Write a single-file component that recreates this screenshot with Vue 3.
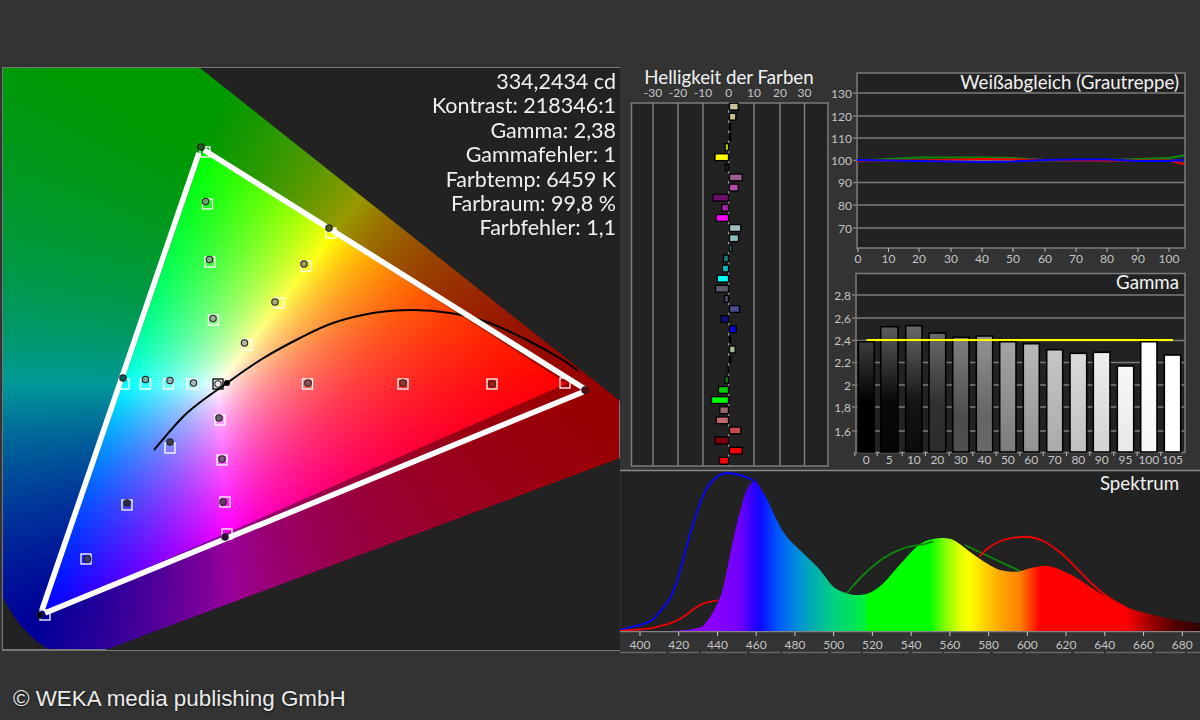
<template>
  <div class="page">
    <div class="charts">
      <div class="cie">
        <canvas ref="gamut" class="gamut" width="616" height="581"></canvas>
        <svg class="overlay" viewBox="3 68 616 581" width="616" height="581">
          <polygon points="200,68 620,401 620,68" fill="#222" />
          <polygon points="620,458 105,650 620,650" fill="#222" />
          <path d="M3,597 C15,622 30,638 48,649 L3,649 Z" fill="#222" />
          <path :d="smooth(locus)" fill="none" stroke="#000" stroke-width="2" />
          <g stroke="#fff" stroke-width="1.3" fill="none">
            <rect v-for="m in markers" :key="'s' + m.sx + m.sy" :x="m.sx - 5" :y="m.sy - 5" width="10" height="10" :stroke="m.black ? '#000' : '#fff'" />
          </g>
          <g fill="none" stroke="#fff" stroke-width="5.6">
            <line x1="199" y1="153" x2="42" y2="610" />
            <line x1="204" y1="150" x2="585" y2="389" />
            <line x1="45" y1="613" x2="583" y2="392" />
          </g>
          <circle v-for="m in markers" :key="'c' + m.cx + m.cy" :cx="m.cx" :cy="m.cy" r="3.2" :fill="m.fill" stroke="#222" stroke-width="1.1" />
          <circle cx="227" cy="383" r="3" fill="#000" />
        </svg>
        <div class="stats">
          <div v-for="line in stats" :key="line">{{ line }}</div>
        </div>
      </div>

      <div class="right">
        <div class="upper">
          <svg class="bright" viewBox="620 67 220 403" width="220" height="403">
            <text x="729" y="84" text-anchor="middle" class="title">Helligkeit der Farben</text>
            <text v-for="t in brightTicks" :key="t.label" :x="t.x" y="97" text-anchor="middle" class="tick">{{ t.label }}</text>
            <rect x="631.5" y="103" width="196.5" height="363" fill="#222" stroke="#7c7c7c" stroke-width="1.5" />
            <line v-for="t in brightTicks.filter(b => b.label !== '0')" :key="'g' + t.label" :x1="t.x" :x2="t.x" y1="103" y2="466" stroke="#7c7c7c" stroke-width="1.5" />
            <line x1="728.7" x2="728.7" y1="110" y2="466" stroke="#999" stroke-width="1.2" stroke-dasharray="3 7.12" />
            <rect
              v-for="(b, i) in brightBars"
              :key="i"
              :x="b.w > 0 ? 729.5 : 728.5 + b.w"
              :y="103.2 + i * 10.12"
              :width="Math.abs(b.w)"
              height="6.8"
              :fill="b.c"
              stroke="#000"
              stroke-width="1.3"
            />
          </svg>

          <div class="side">
            <svg viewBox="840 67 360 201" width="360" height="201">
              <rect x="857" y="73" width="328" height="175" fill="#222" stroke="#7c7c7c" stroke-width="1.5" />
              <g v-for="g in wbRows" :key="g.label">
                <line x1="853" x2="1185" :y1="g.y" :y2="g.y" stroke="#7c7c7c" stroke-width="1.3" />
                <text x="852" :y="g.y + 4.5" text-anchor="end" class="tick">{{ g.label }}</text>
              </g>
              <g v-for="c in wbCols" :key="c.label">
                <line :x1="c.x" :x2="c.x" y1="248" y2="252" stroke="#bbb" />
                <text :x="c.x" y="263" text-anchor="middle" class="tick">{{ c.label }}</text>
              </g>
              <text x="1179" y="89" text-anchor="end" class="title">Weißabgleich (Grautreppe)</text>
              <polyline :points="toPoints(wbGreen)" fill="none" stroke="#0a8a0a" stroke-width="2" />
              <polyline :points="toPoints(wbRed)" fill="none" stroke="#f00000" stroke-width="2" />
              <polyline :points="toPoints(wbBlue)" fill="none" stroke="#0000ff" stroke-width="2" />
            </svg>

            <svg viewBox="840 268 360 202" width="360" height="202">
              <defs>
                <linearGradient v-for="(b, i) in gammaBars" :id="'gammaBar' + i" :key="i" x1="0" y1="0" x2="0" y2="1">
                  <stop v-for="(s, j) in b.stops" :key="j" :offset="s[0]" :stop-color="s[1]" />
                </linearGradient>
              </defs>
              <rect x="856" y="273.5" width="329" height="179" fill="#222" stroke="#7c7c7c" stroke-width="1.5" />
              <g v-for="g in gammaRows" :key="g.label">
                <line x1="852" x2="1185" :y1="g.y" :y2="g.y" stroke="#7c7c7c" stroke-width="1.3" />
                <text x="851" :y="g.y + 4.5" text-anchor="end" class="tick">{{ g.label }}</text>
              </g>
              <g v-for="(b, i) in gammaBars" :key="b.label">
                <rect :x="b.x0" :y="b.top" :width="b.x1 - b.x0" :height="452 - b.top" :fill="'url(#gammaBar' + i + ')'" stroke="#000" stroke-width="1.6" />
                <line :x1="b.x0 - 3.5" :x2="b.x0 - 3.5" y1="452" y2="456" stroke="#bbb" />
                <text :x="(b.x0 + b.x1) / 2" y="464" text-anchor="middle" class="tick">{{ b.label }}</text>
              </g>
              <text x="1179" y="289" text-anchor="end" class="title">Gamma</text>
              <line x1="866.5" x2="1173" y1="340" y2="340" stroke="#ffff00" stroke-width="2" />
            </svg>
          </div>
        </div>

        <svg viewBox="620 470 580 184" width="580" height="184">
          <defs>
            <linearGradient id="spectrumFill" gradientUnits="userSpaceOnUse" x1="621" y1="0" x2="1200" y2="0">
              <stop v-for="s in spectrumStops" :key="s.x" :offset="(s.x - 621) / 579" :stop-color="s.c" />
            </linearGradient>
          </defs>
          <rect x="621" y="471" width="579" height="160.5" fill="#222" />
          <line x1="620" x2="1200" y1="470.5" y2="470.5" stroke="#8a8a8a" stroke-width="1.6" />
          <path :d="spectrumPath" fill="url(#spectrumFill)" />
          <path :d="smooth(blueLine)" fill="none" stroke="#0000ff" stroke-width="1.8" />
          <path :d="smooth(redLeft)" fill="none" stroke="#f00000" stroke-width="1.8" />
          <path :d="smooth(greenLeft)" fill="none" stroke="#0a8a0a" stroke-width="1.8" />
          <path :d="smooth(greenRight)" fill="none" stroke="#0a8a0a" stroke-width="1.8" />
          <path :d="smooth(redRight)" fill="none" stroke="#f00000" stroke-width="1.8" />
          <line x1="620" x2="1200" y1="631.7" y2="631.7" stroke="#999" />
          <g v-for="t in spectrumTicks" :key="t.label">
            <line :x1="t.x" :x2="t.x" y1="632" y2="636" stroke="#ccc" />
            <text :x="t.x" y="649" text-anchor="middle" class="tick">{{ t.label }}</text>
          </g>
          <line x1="620" x2="1200" y1="652.5" y2="652.5" stroke="#666" stroke-width="1.4" stroke-dasharray="46 3 30 2" />
          <text x="1179" y="490" text-anchor="end" class="title">Spektrum</text>
        </svg>
      </div>
    </div>

    <div class="copyright">© WEKA media publishing GmbH</div>
  </div>
</template>

<script setup>
import { ref, onMounted } from 'vue'

const gamut = ref(null)

const stats = [
  '334,2434 cd',
  'Kontrast: 218346:1',
  'Gamma: 2,38',
  'Gammafehler: 1',
  'Farbtemp: 6459 K',
  'Farbraum: 99,8 %',
  'Farbfehler: 1,1'
]

const toPoints = (pts) => pts.map(p => p.join(',')).join(' ')

// catmull-rom through the measured points
const smooth = (pts) => {
  let d = `M${pts[0][0]},${pts[0][1]}`
  for (let i = 0; i < pts.length - 1; i++) {
    const p0 = pts[i - 1] || pts[i]
    const p1 = pts[i]
    const p2 = pts[i + 1]
    const p3 = pts[i + 2] || p2
    const c1x = p1[0] + (p2[0] - p0[0]) / 6
    const c1y = p1[1] + (p2[1] - p0[1]) / 6
    const c2x = p2[0] - (p3[0] - p1[0]) / 6
    const c2y = p2[1] - (p3[1] - p1[1]) / 6
    d += ` C${c1x.toFixed(1)},${c1y.toFixed(1)} ${c2x.toFixed(1)},${c2y.toFixed(1)} ${p2[0]},${p2[1]}`
  }
  return d
}

const locus = [
  [154, 450], [187, 413], [227, 383], [262, 359], [300, 338], [333, 323], [373, 313],
  [413, 310], [450, 313], [487, 322], [527, 340], [563, 360], [578, 371]
]

const markers = [
  { sx: 205, sy: 152, cx: 201, cy: 147, fill: '#1c5c1c' },
  { sx: 207.5, sy: 204, cx: 205.5, cy: 201.5, fill: '#6f9f6f' },
  { sx: 210, sy: 262, cx: 209.5, cy: 259.5, fill: '#8aab8a' },
  { sx: 213.5, sy: 320, cx: 213, cy: 318.5, fill: '#9fb49f' },
  { sx: 331, sy: 233, cx: 329, cy: 228, fill: '#4d5a10' },
  { sx: 306, sy: 266, cx: 304, cy: 264, fill: '#9a9a60' },
  { sx: 279, sy: 303, cx: 275, cy: 302, fill: '#a8a880' },
  { sx: 247, sy: 345, cx: 244.5, cy: 343, fill: '#b4b4a0' },
  { sx: 124, sy: 384, cx: 123, cy: 378, fill: '#0a5a5a' },
  { sx: 145.5, sy: 384, cx: 145.5, cy: 379.5, fill: '#6fa8a8' },
  { sx: 168.5, sy: 384, cx: 170, cy: 380.5, fill: '#88b4b4' },
  { sx: 192, sy: 384, cx: 193.5, cy: 383, fill: '#a4baba' },
  { sx: 218, sy: 384, cx: 218, cy: 384, fill: '#e8e8e8', black: true },
  { sx: 307.5, sy: 384, cx: 308, cy: 383, fill: '#8a5a5a' },
  { sx: 403, sy: 384, cx: 403, cy: 383, fill: '#a03a30' },
  { sx: 492, sy: 384, cx: 492, cy: 384, fill: '#a82010' },
  { sx: 565, sy: 383, cx: 585, cy: 390, fill: '#5a0a0a' },
  { sx: 220, sy: 420, cx: 219, cy: 418, fill: '#6a6070' },
  { sx: 222, sy: 460, cx: 222, cy: 459, fill: '#7a5a7a' },
  { sx: 225, sy: 502, cx: 223, cy: 502, fill: '#6a3a6a' },
  { sx: 227, sy: 534, cx: 225, cy: 537, fill: '#300a40' },
  { sx: 170, sy: 448, cx: 170, cy: 442, fill: '#3a3a4a' },
  { sx: 127, sy: 505, cx: 127, cy: 503, fill: '#2a2a4a' },
  { sx: 86, sy: 559, cx: 87.5, cy: 559, fill: '#3a3a6a' },
  { sx: 45, sy: 615, cx: 40, cy: 615, fill: '#05052a' }
]

const brightTicks = [
  { label: '-30', x: 653 }, { label: '-20', x: 678 }, { label: '-10', x: 703 }, { label: '0', x: 728.7 },
  { label: '10', x: 754 }, { label: '20', x: 780 }, { label: '30', x: 804.5 }
]

const brightBars = [
  { w: 8.7, c: '#c9c29a' }, { w: 6.3, c: '#c8c088' }, { w: 1.2, c: '#111' }, { w: 1.2, c: '#111' },
  { w: -3.3, c: '#d5d500' }, { w: -13.5, c: '#ffff00' }, { w: -3, c: '#222' }, { w: 12.7, c: '#9c5f94' },
  { w: 8.7, c: '#b84fb0' }, { w: -15.7, c: '#6a0f6a' }, { w: -6.7, c: '#b020b0' }, { w: -12.3, c: '#ff00ff' },
  { w: 11.3, c: '#a0bcbc' }, { w: 9, c: '#8cc0c0' }, { w: 2.5, c: '#2a7a7a' }, { w: -5, c: '#157a7a' },
  { w: -6, c: '#00c0c0' }, { w: -11.3, c: '#00ffff' }, { w: -13, c: '#5a5a6a' }, { w: -4, c: '#4a4a7a' },
  { w: 10, c: '#4a4a90' }, { w: -7.5, c: '#101080' }, { w: 6.7, c: '#0000e0' }, { w: 1.2, c: '#111' },
  { w: 5.7, c: '#a0c090' }, { w: 1.2, c: '#111' }, { w: -1.5, c: '#3a8a3a' }, { w: -3.7, c: '#108010' },
  { w: -10, c: '#00d000' }, { w: -17, c: '#00ff00' }, { w: -8.7, c: '#9a6a6a' }, { w: -12.3, c: '#c06868' },
  { w: 11.3, c: '#c84a4a' }, { w: -13.7, c: '#800010' }, { w: 12.7, c: '#ee0000' }, { w: -9, c: '#ff0000' }
]

const wbRows = [
  { label: '130', y: 93 }, { label: '120', y: 116 }, { label: '110', y: 138 }, { label: '100', y: 160.5 },
  { label: '90', y: 182.5 }, { label: '80', y: 205 }, { label: '70', y: 228 }
]

const wbCols = [
  { label: '0', x: 858 }, { label: '10', x: 888.5 }, { label: '20', x: 919 }, { label: '30', x: 951 },
  { label: '40', x: 982 }, { label: '50', x: 1013 }, { label: '60', x: 1045 }, { label: '70', x: 1076 },
  { label: '80', x: 1107 }, { label: '90', x: 1138 }, { label: '100', x: 1169 }
]

const wbGreen = [[857, 160.5], [919, 157.5], [982, 157.5], [1013, 158], [1045, 160], [1107, 160], [1138, 159], [1169, 158], [1184, 155.5]]
const wbRed = [[857, 160.5], [919, 160.5], [982, 159], [1045, 160], [1107, 160.5], [1169, 160.5], [1184, 164]]
const wbBlue = [[857, 160], [919, 161], [982, 162], [1013, 161.5], [1045, 160], [1076, 159.5], [1107, 159.5], [1138, 161], [1169, 161], [1184, 160]]

const gammaRows = [
  { label: '2,8', y: 295 }, { label: '2,6', y: 318 }, { label: '2,4', y: 340.5 }, { label: '2,2', y: 362.5 },
  { label: '2', y: 385 }, { label: '1,8', y: 407 }, { label: '1,6', y: 431 }
]

const gammaBars = [
  { label: '0', x0: 858.3, x1: 874.3, top: 341.7, stops: [[0, '#3c3c3c'], [0.55, '#000'], [1, '#000']] },
  { label: '5', x0: 880.7, x1: 898, top: 326.7, stops: [[0, '#5c5c5c'], [0.6, '#080808'], [1, '#050505']] },
  { label: '10', x0: 905.7, x1: 922, top: 325.7, stops: [[0, '#686868'], [0.6, '#141414'], [1, '#0c0c0c']] },
  { label: '20', x0: 929, x1: 945.7, top: 333, stops: [[0, '#6a6a6a'], [0.6, '#303030'], [1, '#2c2c2c']] },
  { label: '30', x0: 952.7, x1: 969, top: 337.3, stops: [[0, '#808080'], [0.7, '#4c4c4c'], [1, '#505050']] },
  { label: '40', x0: 976.3, x1: 992.7, top: 336, stops: [[0, '#939393'], [0.7, '#646464'], [1, '#6a6a6a']] },
  { label: '50', x0: 999.7, x1: 1016, top: 341.7, stops: [[0, '#a4a4a4'], [1, '#7c7c7c']] },
  { label: '60', x0: 1023.3, x1: 1039.3, top: 343.7, stops: [[0, '#b8b8b8'], [1, '#929292']] },
  { label: '70', x0: 1046.7, x1: 1062.7, top: 349.7, stops: [[0, '#c6c6c6'], [1, '#aaaaaa']] },
  { label: '80', x0: 1070, x1: 1086.7, top: 353.3, stops: [[0, '#dadada'], [1, '#c0c0c0']] },
  { label: '90', x0: 1093.3, x1: 1110, top: 352.3, stops: [[0, '#eeeeee'], [1, '#d2d2d2']] },
  { label: '95', x0: 1117.3, x1: 1133.7, top: 366, stops: [[0, '#f8f8f8'], [1, '#e8e8e8']] },
  { label: '100', x0: 1140.7, x1: 1157, top: 341.7, stops: [[0, '#ffffff'], [1, '#f6f6f6']] },
  { label: '105', x0: 1164.3, x1: 1180.7, top: 355, stops: [[0, '#ffffff'], [1, '#ffffff']] }
]

const nmToX = (nm) => 640 + (nm - 400) * 1.9367
const spectrumTicks = Array.from({ length: 15 }, (_, i) => ({ label: String(400 + i * 20), x: nmToX(400 + i * 20) }))

const spectrumStops = [
  { x: 671, c: '#a000ff' }, { x: 716, c: '#8a00ff' }, { x: 740, c: '#7000ff' }, { x: 755, c: '#2800ff' },
  { x: 762, c: '#0a10ff' }, { x: 776, c: '#0050ff' }, { x: 795, c: '#0088e0' }, { x: 810, c: '#00a8b8' },
  { x: 833, c: '#00d080' }, { x: 850, c: '#00e060' }, { x: 865, c: '#00f040' }, { x: 868, c: '#00ff00' },
  { x: 930, c: '#00ff00' }, { x: 945, c: '#80ff00' }, { x: 960, c: '#e0ff00' }, { x: 970, c: '#ffff00' },
  { x: 985, c: '#ffd000' }, { x: 1000, c: '#ffa800' }, { x: 1020, c: '#ff8000' }, { x: 1030, c: '#ff4000' },
  { x: 1040, c: '#ff0000' }, { x: 1125, c: '#ff0000' }, { x: 1150, c: '#a00000' }, { x: 1175, c: '#500000' },
  { x: 1200, c: '#300000' }
]

const spectrumOutline = [
  [621, 631], [670, 631], [697, 628.3], [706.7, 621.7], [716.7, 605], [723, 588], [730, 555], [735, 531.7], [740, 511.7],
  [746.7, 490], [755, 481], [761.7, 490], [768.3, 501.7], [776.7, 520], [786.7, 536.7], [803.3, 553.3], [820, 570],
  [833.3, 586.7], [846.7, 593.3], [856.7, 595], [870, 592.7], [883.3, 583.3], [896.7, 568.3], [913.3, 550], [923.3, 542.3],
  [933.3, 539], [943.3, 538], [953.3, 540], [963.3, 546.7], [973.3, 554.3], [986.7, 563.3], [1000, 570], [1016.7, 571.7],
  [1030, 568.3], [1046.7, 565.7], [1063.3, 571], [1080, 580], [1100, 593.3], [1126.7, 607.3], [1153.3, 615], [1176.7, 620],
  [1200, 623.3]
]
const spectrumPath = smooth(spectrumOutline) + ' L1200,631 L621,631 Z'

const blueLine = [[620, 630], [648, 622.3], [657, 615], [670, 598], [678, 578], [687, 545], [697, 511.7], [707, 488], [717, 476.7], [728, 473], [745, 476.7], [755, 481.7]]
const redLeft = [[620, 630.7], [650, 628.3], [667, 624.3], [680, 619], [697, 606.7], [707, 602.3], [717.7, 600.3]]
const greenLeft = [[846.7, 593.3], [863.3, 575], [883.3, 558.3], [903.3, 548.3], [923.3, 544.3], [933.3, 541.3]]
const greenRight = [[965, 545], [980, 552.3], [1000, 561.7], [1020, 571]]
const redRight = [[979.3, 556.7], [990, 546.7], [1003.3, 540], [1016.7, 537.3], [1030, 537], [1043.3, 541], [1060, 552.3], [1076.7, 568.3], [1093.3, 585], [1110, 598.3], [1126.7, 607.7]]

// vertices of the colour triangle, in page coordinates
const G = [203, 149]
const R = [566, 383]
const B = [43, 613]
const WHITE = [218, 384]

const barycentric = (x, y) => {
  const d = (G[1] - B[1]) * (R[0] - B[0]) + (B[0] - G[0]) * (R[1] - B[1])
  const r = ((G[1] - B[1]) * (x - B[0]) + (B[0] - G[0]) * (y - B[1])) / d
  const g = ((B[1] - R[1]) * (x - B[0]) + (R[0] - B[0]) * (y - B[1])) / d
  return [r, g, 1 - r - g]
}

const paintGamut = () => {
  const ctx = gamut.value.getContext('2d')
  const { width, height } = gamut.value
  const img = ctx.createImageData(width, height)
  const w = barycentric(WHITE[0], WHITE[1])
  for (let py = 0; py < height; py++) {
    for (let px = 0; px < width; px++) {
      const x = px + 3
      const y = py + 68
      const b = barycentric(x, y)
      const lin = b.map((v, i) => Math.max(0, v / w[i]))
      const top = Math.max(lin[0], lin[1], lin[2])
      // soft edge of the bright triangle, roughly one pixel wide
      const edge = Math.min(b[0] * 330, b[1] * 330, b[2] * 330)
      const inside = Math.min(1, Math.max(0, edge + 0.5))
      const dim = 0.6 + 0.4 * inside
      const i = (py * width + px) * 4
      for (let c = 0; c < 3; c++) {
        img.data[i + c] = 255 * dim * (lin[c] / top)
      }
      img.data[i + 3] = 255
    }
  }
  ctx.putImageData(img, 0, 0)
}

onMounted(paintGamut)
</script>

<style scoped>
.page {
  width: 1200px;
  height: 720px;
  background: #333;
  display: flex;
  flex-direction: column;
  overflow: hidden;
  font-family: Lato, "Open Sans", sans-serif;
}

.charts {
  display: flex;
  margin-top: 67px;
  padding-left: 2px;
}

.cie {
  position: relative;
  width: 616px;
  height: 581px;
  border: 1px solid #777;
  border-bottom-width: 2px;
  background: #222;
}

.gamut {
  display: block;
}

.overlay {
  position: absolute;
  top: 0;
  left: 0;
}

.stats {
  position: absolute;
  top: 1px;
  right: 3px;
  text-align: right;
  color: #f0f0f0;
  font-size: 21.5px;
  line-height: 24.4px;
}

.right {
  width: 580px;
  display: flex;
  flex-direction: column;
}

.upper {
  display: flex;
}

.side {
  display: flex;
  flex-direction: column;
}

svg {
  display: block;
  overflow: visible;
}

.title {
  fill: #f2f2f2;
  font-size: 18.7px;
}

.tick {
  fill: #c4c4c4;
  font-size: 12px;
}

.copyright {
  margin-top: 32px;
  padding-left: 13px;
  font-family: "Liberation Sans", Arial, sans-serif;
  font-size: 22.4px;
  color: #ececec;
  text-shadow: 0 1px 2px #111;
}
</style>

<style>
body {
  background: #333;
}
</style>
